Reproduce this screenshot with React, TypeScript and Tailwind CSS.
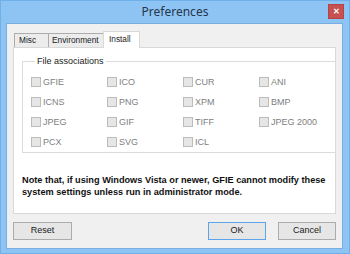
import React from "react";

const items = [
  "GFIE", "ICO", "CUR", "ANI",
  "ICNS", "PNG", "XPM", "BMP",
  "JPEG", "GIF", "TIFF", "JPEG 2000",
  "PCX", "SVG", "ICL",
];

function Check({ label }: { label: string }) {
  return (
    <div className="flex items-center h-[20px] gap-[2px]">
      <div className="w-[10px] h-[10px] border border-[#bcbcbc] bg-[#e6e6e6]" />
      <span className="text-[#7e7e7e] text-[9px] leading-none">{label}</span>
    </div>
  );
}

export default function App() {
  return (
    <div
      className="w-[350px] h-[254px] bg-[#8ec4f4] flex flex-col border border-[#6fb0ea]"
      style={{ fontFamily: '"Liberation Sans", Arial, sans-serif' }}
    >
      <div className="h-[22px] grid grid-cols-[1fr_auto_1fr] items-center">
        <div />
        <div
          className="text-[12px] text-[#26364a] leading-none"
          style={{ fontFamily: '"Noto Sans", sans-serif' }}
        >
          Preferences
        </div>
        <div className="flex justify-end pr-[5px] self-start pt-[3px]">
          <div className="w-[16px] h-[15px] bg-[#c75050] border border-[#b24545] flex items-center justify-center text-white text-[8px] font-bold leading-none">
            ✕
          </div>
        </div>
      </div>
      <div className="flex-1 ml-[5px] mr-[6px] mb-[4px] bg-[#f0f0f0] border border-[#79aee0] flex flex-col px-[6px] pt-[7px] pb-[8px]">
        <div className="h-[16px] flex items-end pl-[1px] text-[8.3px] text-[#1a1a1a]">
          <div className="h-[14px] w-[35px] border border-b-0 border-[#acacac] bg-[#ececec] flex items-center pl-[4px]">
            Misc
          </div>
          <div className="h-[14px] w-[56px] -ml-px border border-b-0 border-[#acacac] bg-[#ececec] flex items-center pl-[3px]">
            Environment
          </div>
          <div className="relative z-10 h-[17px] w-[37px] -ml-px -mb-px border border-b-0 border-[#d9d9d9] bg-white flex items-center pl-[5px] pb-[1px]">
            Install
          </div>
        </div>
        <div className="h-[167px] bg-white border border-[#d9d9d9] flex flex-col pl-[8px] pr-[6px] pt-[7px]">
          <fieldset className="border border-[#dcdcdc] pl-[8px] pt-[5px]">
            <legend className="ml-[4px] px-[2px] text-[9px] leading-[12px] text-[#1a1a1a]">
              File associations
            </legend>
            <div className="grid grid-cols-[76px_76px_76px_76px]">
              {items.map((l) => (
                <Check key={l} label={l} />
              ))}
            </div>
          </fieldset>
          <div className="mt-[21px] text-[9.2px] font-bold leading-[12px] text-[#111] whitespace-nowrap">
            Note that, if using Windows Vista or newer, GFIE cannot modify these
            <br />
            system settings unless run in administrator mode.
          </div>
        </div>
        <div className="mt-[8px] flex items-center text-[9px] text-[#1a1a1a]">
          <div className="w-[59px] h-[18px] border border-[#acacac] bg-[#e6e6e6] flex items-center justify-center">
            Reset
          </div>
          <div className="flex-1" />
          <div className="w-[58px] h-[18px] border border-[#5da5ea] bg-[#e6e6e6] flex items-center justify-center">
            OK
          </div>
          <div className="w-[58px] h-[18px] ml-[12px] border border-[#acacac] bg-[#e6e6e6] flex items-center justify-center">
            Cancel
          </div>
        </div>
      </div>
    </div>
  );
}
